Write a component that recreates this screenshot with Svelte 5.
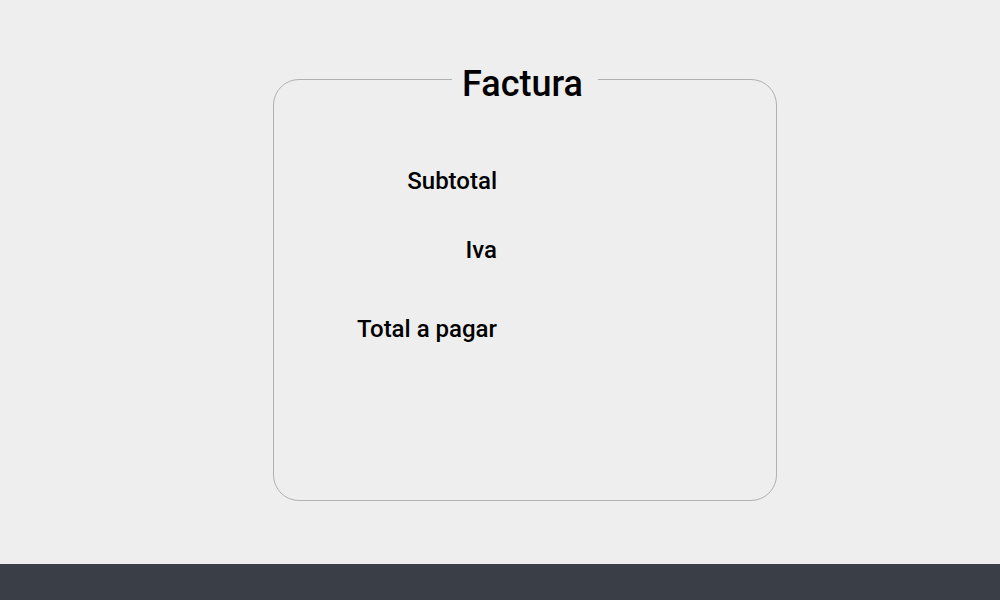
<script>
  const rows = [
    { label: 'Subtotal', last: false },
    { label: 'Iva', last: false },
    { label: 'Total a pagar', last: true }
  ];
</script>

<div class="page">
  <main>
    <fieldset class="invoice">
      <legend>Factura</legend>
      <dl>
        {#each rows as { label, last }}
          <div class="row" class:total={last}>
            <dt>{label}</dt>
            <dd></dd>
          </div>
        {/each}
      </dl>
    </fieldset>
  </main>
  <footer></footer>
</div>

<style>
  :global(body) {
    margin: 0;
  }
  .page {
    min-height: 100vh;
    display: flex;
    flex-direction: column;
    background: #eeeeee;
    color: #000;
    font-family: Roboto, sans-serif;
    font-weight: 500;
  }
  main {
    flex: 1;
    padding: 53px 24px 63px;
    display: flex;
    justify-content: center;
    box-sizing: border-box;
  }
  .invoice {
    box-sizing: border-box;
    width: 100%;
    max-width: 504px;
    margin: 0 0 0 50px;
    padding: 0;
    border: 1px solid #b0b0b0;
    border-radius: 26px;
  }
  legend {
    margin-left: 178px;
    padding: 10px 15px 0 10px;
    font-size: 36px;
    line-height: 42px;
  }
  dl {
    margin: 0;
    padding-top: 62px;
    display: grid;
    gap: 41px;
  }
  .row {
    display: grid;
    grid-template-columns: 223px 1fr;
  }
  .total {
    padding-top: 10px;
  }
  dt {
    text-align: right;
    font-size: 24px;
    line-height: 28px;
  }
  dd {
    margin: 0;
  }
  footer {
    height: 36px;
    background: #3a3e47;
  }
</style>
